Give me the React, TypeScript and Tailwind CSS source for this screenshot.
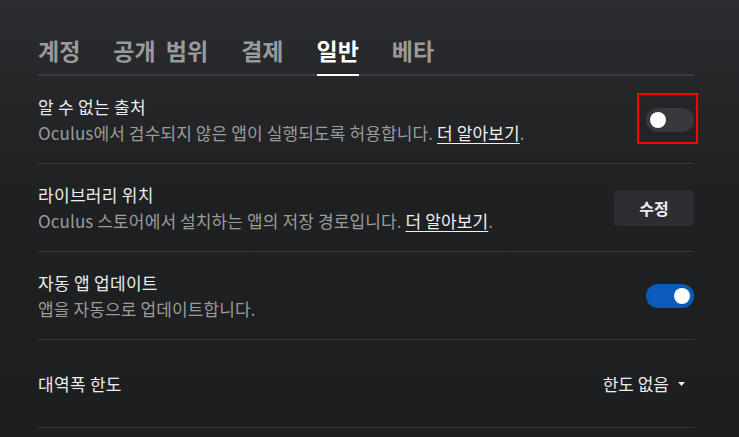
import React from "react";

const tabs = ["계정", "공개 범위", "결제", "일반", "베타"];

function Toggle({ on }: { on: boolean }) {
  return (
    <div
      className={
        on
          ? "flex h-6 w-12 items-center justify-end rounded-full bg-[#0b5cba] px-1"
          : "flex h-6 w-12 items-center justify-start rounded-full bg-[#38393c] px-1"
      }
    >
      <div className="h-4 w-4 rounded-full bg-white" />
    </div>
  );
}

function Row({
  title,
  sub,
  link,
  right,
}: {
  title: string;
  sub?: string;
  link?: boolean;
  right: React.ReactNode;
}) {
  return (
    <div className="flex h-[88px] items-center justify-between border-b border-[#36373a]">
      <div className="flex flex-col">
        <div className="text-[17px] leading-[26px] tracking-[0.3px] text-[#ececec]">{title}</div>
        {sub && (
          <div className="text-[17px] leading-[26px] tracking-[0.12px] text-[#9b9b9b]">
            {sub}
            {link && (
              <>
                {" "}
                <span className="text-[#f0f0f0] underline underline-offset-[3px]">더 알아보기</span>.
              </>
            )}
          </div>
        )}
      </div>
      {right}
    </div>
  );
}

export default function App() {
  return (
    <div
      className="h-[437px] w-[739px] overflow-hidden bg-gradient-to-b from-[#2b2c2f] via-[#1f2022] via-45% to-[#1d1e20] pl-[38px] pr-[45px]"
      style={{ fontFamily: '"Noto Sans CJK KR", "Noto Sans", sans-serif' }}
    >
      <div className="flex h-[76px] items-end gap-[33px] border-b-2 border-[#3b3c3f]">
        {tabs.map((t) => (
          <div
            key={t}
            className={
              t === "일반"
                ? "-mb-[2px] border-b-2 border-white pb-[10px] text-[23px] leading-[28px] font-bold [word-spacing:5px] text-white"
                : "-mb-[2px] border-b-2 border-transparent pb-[10px] text-[23px] leading-[28px] font-bold [word-spacing:5px] text-[#999a9c]"
            }
          >
            {t}
          </div>
        ))}
      </div>

      <Row
        title="알 수 없는 출처"
        sub="Oculus에서 검수되지 않은 앱이 실행되도록 허용합니다."
        link
        right={
          <div className="relative">
            <Toggle on={false} />
            <div className="absolute -top-[15px] -right-[4px] -bottom-[12px] -left-[9px] border-2 border-[#ff0000]" />
          </div>
        }
      />
      <Row
        title="라이브러리 위치"
        sub="Oculus 스토어에서 설치하는 앱의 저장 경로입니다."
        link
        right={
          <button className="h-9 w-20 rounded bg-[#2c2d30] text-[16px] font-bold text-[#ececec]">
            수정
          </button>
        }
      />
      <Row
        title="자동 앱 업데이트"
        sub="앱을 자동으로 업데이트합니다."
        right={<Toggle on />}
      />
      <Row
        title="대역폭 한도"
        right={
          <div className="flex items-center gap-[9px] pr-[9px] text-[17px] text-[#ececec]">
            <span>한도 없음</span>
            <svg width="7" height="4" viewBox="0 0 7 4">
              <path d="M0 0h7L3.5 4z" fill="#ececec" />
            </svg>
          </div>
        }
      />
    </div>
  );
}
